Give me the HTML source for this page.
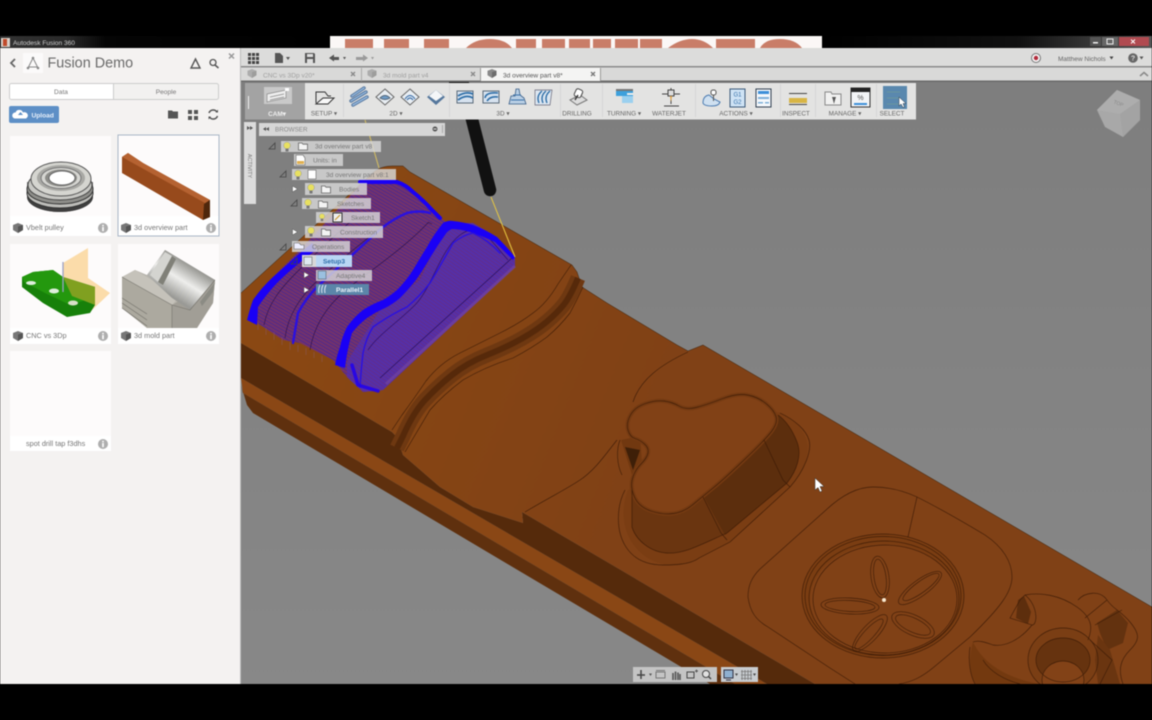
<!DOCTYPE html>
<html><head><meta charset="utf-8"><title>Fusion 360</title>
<style>
html,body{margin:0;padding:0;background:#000;width:1152px;height:720px;overflow:hidden}
svg{display:block;position:absolute;left:0;top:0;filter:blur(.4px)}
text{font-family:"Liberation Sans",sans-serif}
.l{font-size:6.4px;fill:#666;text-anchor:middle}
.t{font-size:6.6px;fill:#777}
.c{font-size:7.3px;fill:#777}
.m{fill:none;stroke:#3a1a06;stroke-width:.65;opacity:.9}
</style></head><body>
<svg width="1152" height="720" viewBox="0 0 1152 720" xmlns="http://www.w3.org/2000/svg">
<defs>
<linearGradient id="tb" x1="0" x2="1" y1="0" y2="0"><stop offset="0" stop-color="#333"/><stop offset=".2" stop-color="#2a2a2a"/><stop offset=".32" stop-color="#050505"/><stop offset="1" stop-color="#000"/></linearGradient>
<linearGradient id="tr" x1="0" x2="1" y1="0" y2="0"><stop offset="0" stop-color="#000"/><stop offset=".6" stop-color="#111"/><stop offset="1" stop-color="#555"/></linearGradient>
<linearGradient id="vp" x1="0" x2="0" y1="0" y2="1"><stop offset="0" stop-color="#7e7e7e"/><stop offset="1" stop-color="#888"/></linearGradient>
<linearGradient id="sf" gradientUnits="userSpaceOnUse" x1="280" y1="300" x2="660" y2="450"><stop offset="0" stop-color="#8a4813"/><stop offset="1" stop-color="#804116"/></linearGradient>
<linearGradient id="ch" gradientUnits="userSpaceOnUse" x1="178" y1="300" x2="198" y2="268"><stop offset="0" stop-color="#9a9a96"/><stop offset=".5" stop-color="#eeeeec"/><stop offset="1" stop-color="#8f8f8a"/></linearGradient>
<pattern id="h1" width="3" height="3" patternUnits="userSpaceOnUse" patternTransform="rotate(30)"><rect width="3" height="3" fill="#75326a"/><rect width="3" height="1" fill="#4f2a8c"/></pattern>
<pattern id="h2" width="3" height="3" patternUnits="userSpaceOnUse" patternTransform="rotate(-55)"><rect width="3" height="3" fill="#5f2e94"/><rect width="1.2" height="3" fill="#5030b0"/></pattern>
<symbol id="bulb" viewBox="0 0 10 12" overflow="visible"><circle cx="5" cy="4.500" r="3.400" fill="#e8e060" stroke="#999" stroke-width=".5"/><rect x="3.500" y="7.500" width="3" height="3" fill="#777"/></symbol>
<symbol id="fold" viewBox="0 0 10 10" overflow="visible"><path d="M.5 2H4L5 3.200H9.500V9H.5Z" fill="#f4f4f4" stroke="#666" stroke-width=".8"/></symbol>
<symbol id="cube" viewBox="0 0 10 10" overflow="visible"><path d="M0 2L5 0 10 2V7L5 10 0 7Z" fill="#777"/><path d="M5 3.500L10 2V7L5 10Z" fill="#555"/></symbol>
<symbol id="info" viewBox="0 0 10 10" overflow="visible"><circle cx="5" cy="5" r="5" fill="#aeaeae"/><rect x="4.200" y="4" width="1.600" height="4.200" fill="#fff"/><rect x="4.200" y="1.800" width="1.600" height="1.500" fill="#fff"/></symbol>
</defs>

<rect width="1152" height="720" fill="#000"/>
<rect x="0" y="36" width="330" height="12" fill="url(#tb)"/>
<rect x="822" y="36" width="330" height="12" fill="url(#tr)"/>
<rect x="330" y="36" width="492" height="12" fill="#fbf7f6"/>
<g fill="#c97d68">
<rect x="345" y="39" width="28" height="9"/><rect x="384" y="39" width="25" height="9"/><rect x="424" y="39" width="25" height="9"/>
<path d="M466 48Q475 39 490 39T512 48Z"/><rect x="516" y="39" width="20" height="9"/><rect x="542" y="39" width="23" height="9"/><rect x="569" y="39" width="21" height="9"/><rect x="593" y="39" width="18" height="9"/><rect x="615" y="39" width="23" height="9"/>
<rect x="640" y="39" width="22" height="9"/><path d="M668 48Q680 39 692 39T713 48Z"/><rect x="716" y="39" width="39" height="9"/><path d="M760 48Q765 39 780 39T802 48Z"/>
</g>
<rect x="1" y="38" width="9" height="9" fill="#d8d0c8"/><rect x="3" y="39" width="4" height="7" fill="#c04a2a"/>
<text x="13" y="45" font-size="6.600" fill="#cfcfcf">Autodesk Fusion 360</text>
<g><rect x="1090" y="37" width="11" height="9" fill="#555"/><rect x="1093" y="42" width="5" height="1.500" fill="#eee"/><rect x="1102" y="37" width="16" height="9" fill="#666"/><rect x="1107" y="39" width="6" height="5" fill="none" stroke="#eee"/><rect x="1119" y="37" width="30" height="9" fill="#b04a50"/><path d="M1131 39.500l4 4M1135 39.500l-4 4" stroke="#fff" stroke-width="1"/></g>

<!-- viewport -->
<rect x="241" y="81" width="911" height="603" fill="url(#vp)"/>
<!-- model base -->
<path d="M241 378L767 684H735L243 393Z" fill="#8a4715"/>
<path d="M241 385L243 393 735 684H710L253 413 247 405Z" fill="#5f300e"/>
<path d="M241 343L392 432 397 437 403 455 440 487 473 507 523 523 522 512 815 684H767L241 378Z" fill="#552a0b"/>
<path d="M241 293L375 171Q382 166 392 166H403L410 172 572 265 577 272 582 287 607 303 677 345 688 351 703 345 1152 607V684H815L522 512 523 523 473 507 440 487 403 455 397 437 392 432 241 343Z" fill="url(#sf)"/>
<path d="M241 293L375 171Q382 166 392 166H403L410 172 572 265 577 272 582 287 607 303 677 345 688 351 703 345 1152 607" fill="none" stroke="#3c2008" stroke-width=".5"/>

<!-- groove -->
<path d="M397 448L403 436Q413 413 425 400 437 387 452 375 467 363 487 355 507 347 522 338.500 537 330 547 321.500 557 313 563.500 305 570 297 578 278" fill="none" stroke="#6e3811" stroke-width="15"/>
<path d="M397 448L403 436Q413 413 425 400 437 387 452 375 467 363 487 355 507 347 522 338.500 537 330 547 321.500 557 313 563.500 305 570 297 578 278" fill="none" stroke="#56290a" stroke-width="6"/>
<path class="m" d="M392 430L402 415Q413 400 426 381 440 363 460 353 480 343 500 333 520 323 533 313 547 303 558 284L571 265"/>
<path class="m" d="M405 452Q418 430 430 410 443 395 463 380 485 367 513 358 532 348 547 337 560 326 570 313 577 300 583 287"/>
<path class="m" d="M525 512C550 497 565 490 580 480S605 455 617 440"/>
<path class="m" d="M633 402C640 380 660 365 688 352"/>

<!-- boss -->
<path d="M628 490C620 510 622 535 640 552S685 568 699 558L730 542 790 487C805 470 812 450 805 436S790 418 778 412Z" fill="#7a3d13"/>
<path d="M632 490V527C636 540 650 552 667 553S700 545 727 533L787 483C797 470 802 455 797 442S785 420 778 415L700 495Z" fill="#6a3510"/>
<path d="M704 497L725 535 787 483C797 470 802 455 797 442S785 420 778 415L765 440Z" fill="#5c2e0d"/>
<path d="M621 440L640 436 642 462 632 475Z" fill="#713810"/>
<path d="M625 447L640 450 633 470Z" fill="#3e1f08"/>
<path d="M630.500 415Q635 407 645.500 403.500 656 400 664 401 672 402 679 406 686 410 696 407.500 706 405 721.500 399 737 393 747.500 395 758 397 766 403.500 774 410 776 416.500 778 423 771.500 431.500 765 440 744 460 723 480 712.500 488.500 702 497 693 504.500 684 512 673.500 513.500 663 515 651 511 639 507 634.500 497 630 487 632.500 478.500 635 470 641 464 647 458 648 453 649 448 644.500 444 640 440 635 438.500 630 437 628 430 626 423 630.500 415Z" fill="#814116" stroke="#743a12" stroke-width="4"/>
<path class="m" d="M630.500 415Q635 407 645.500 403.500 656 400 664 401 672 402 679 406 686 410 696 407.500 706 405 721.500 399 737 393 747.500 395 758 397 766 403.500 774 410 776 416.500 778 423 771.500 431.500 765 440 744 460 723 480 712.500 488.500 702 497 693 504.500 684 512 673.500 513.500 663 515 651 511 639 507 634.500 497 630 487 632.500 478.500 635 470 641 464 647 458 648 453 649 448 644.500 444 640 440 635 438.500 630 437 628 430 626 423 630.500 415Z"/>
<path class="m" d="M620 440C616 450 617 465 622 475"/>
<path class="m" d="M632 490V527C636 540 650 552 667 553S700 545 727 533L787 483C797 470 802 455 797 442S785 420 778 415"/>
<path class="m" d="M625 490C617 505 615 530 626 547S655 565 663 565 690 565 699 558L730 542 790 487C805 470 812 450 809 440S795 420 780 413"/>
<path class="m" d="M703 497L721 533 727 540M764 440L783 480 790 487"/>

<!-- cursor -->
<path d="M815 478V490L818 487.500 820 492 822 491 820 486.500H824Z" fill="#fff" stroke="#333" stroke-width=".5"/>

<!-- round square + disc -->
<path class="m" d="M748 597C748 585 752 577 760 569L826 510C842 495 858 487 873 487 888 487 902 490 917 497 935 506 965 523 985 535 1003 547 1012 562 1012 577 1012 592 1000 608 970 637L934 667C922 677 912 682 899 684M748 597C750 612 756 620 768 627L830 668 855 684"/>
<path class="m" d="M917 497L908 537"/>
<ellipse cx="883" cy="596" rx="81" ry="62" fill="#773a11" opacity=".6"/>
<ellipse cx="884" cy="600" rx="74" ry="56" fill="#804116"/>
<ellipse cx="883" cy="596" rx="81" ry="62" class="m"/>
<ellipse cx="883" cy="596" rx="78" ry="59.500" class="m"/>
<ellipse cx="884" cy="598" rx="75" ry="57" class="m"/>
<ellipse cx="885" cy="599" rx="72" ry="54" class="m"/>
<g class="m">
<ellipse cx="880" cy="577" rx="9" ry="21" transform="rotate(-8 880 577)"/><ellipse cx="880" cy="577" rx="6" ry="18" transform="rotate(-8 880 577)"/>
<ellipse cx="920" cy="588" rx="26" ry="8" transform="rotate(-36 920 588)"/><ellipse cx="921" cy="587" rx="22" ry="5.500" transform="rotate(-36 921 587)"/>
<ellipse cx="850" cy="606" rx="29" ry="8" transform="rotate(3 850 606)"/><ellipse cx="850" cy="606" rx="25" ry="5.500" transform="rotate(3 850 606)"/>
<ellipse cx="870" cy="633" rx="24" ry="8" transform="rotate(-47 870 633)"/><ellipse cx="869" cy="634" rx="20" ry="5" transform="rotate(-47 869 634)"/>
<ellipse cx="913" cy="625" rx="23" ry="10" transform="rotate(25 913 625)"/><ellipse cx="913" cy="625" rx="19" ry="7" transform="rotate(25 913 625)"/>
</g>
<circle cx="884" cy="600" r="2" fill="#f8e8d0"/>

<!-- bottom-right shapes -->
<path d="M973 642C968 660 970 675 975 684H1040C1015 680 985 668 973 642Z" fill="#73390f"/>
<path d="M1018 600L1024 596 1031 612 1028 624 1016 618Z" fill="#5d2e0d"/>
<ellipse cx="1063" cy="660" rx="35" ry="32" fill="#7a3e14"/>
<ellipse cx="1063" cy="660" rx="27" ry="22" fill="#66330f"/>
<ellipse cx="1063" cy="680" rx="21" ry="19" fill="#824217"/>
<path d="M1097 623L1117 610 1128 623 1123 643 1107 650 1100 633Z" fill="#63320f"/>
<path d="M1098 635L1110 650 1120 684H1098L1095 660Z" fill="#6a3510"/>
<g class="m">
<path d="M973 642C978 640 985 642 993 645 1005 647 1020 640 1032 625L1010 618 1020 600 1025 595C1040 592 1060 595 1077 607S1092 630 1088 640"/>
<path d="M970 647C968 660 970 675 975 684M983 660C990 672 1005 680 1020 684"/>
<path d="M1025 595C1038 605 1038 625 1032 625"/>
<ellipse cx="1063" cy="660" rx="35" ry="32"/><ellipse cx="1063" cy="660" rx="27" ry="22"/><ellipse cx="1063" cy="680" rx="21" ry="19"/>
<path d="M1078 600C1085 592 1100 590 1107 600S1120 610 1130 622 1140 640 1130 650 1118 670 1123 684"/>
<path d="M1085 618L1107 600M1095 625L1122 610M1090 640L1112 660 1100 684"/>
</g>

<!-- toolpath -->
<path d="M250 320L273 277 300 250 363 182H393L413 190 432 210 447 223H473L497 237 515 257V267L383 390 363 392 347 377 333 360 300 343 283 340 257 323Z" fill="url(#h1)"/>
<path d="M347 362L380 310 420 280 447 223H473L497 237 515 257V267L383 390 363 392 347 377Z" fill="url(#h2)"/>
<path d="M380 378L512 258" fill="none" stroke="#2a1060" stroke-width=".7"/>
<path d="M386 384L515 266" fill="none" stroke="#7a4aa0" stroke-width="3" opacity=".55"/>
<path d="M368 350C378 335 398 322 415 305S440 250 460 235 490 240 508 260" fill="none" stroke="#300f6a" stroke-width=".7"/>
<g fill="none" stroke="#2a1048" stroke-width=".6"><path d="M264 325C268 303 282 287 297 272S330 240 350 222"/><path d="M285 338C288 315 300 297 318 280S360 245 380 228"/><path d="M310 350C314 325 328 305 346 290S385 262 410 240 425 222 432 224"/></g>
<path d="M247 320Q250 308 253 300 262 287 273 277L300 253 312 243 316 250 303 260Q288 272 277 283 265 296 258 307L257 325Z" fill="#1a00f5"/>
<path d="M335 365Q337 355 340 347 342 337 347 327 354 317 363 310 372 304 383 300 390 296 397 290 406 281 413 270 420 258 427 247 434 234 443 223 448 220 453 221 463 222 473 225 486 230 497 237 507 247 515 257L513 260Q504 251 495 242 482 236 470 232 460 229 452 229 447 231 445 235 437 246 430 258 423 270 416 280 408 290 400 298 393 304 385 308 376 312 367 318 358 325 352 333 347 350 345 368Z" fill="#1a00f5"/>
<g fill="none" stroke-linecap="round" stroke-linejoin="round">
<path d="M360 182H397Q406 185 413 192 423 200 432 210L440 218" stroke="#1a00f5" stroke-width="4"/>
<path d="M293 343Q296 325 298 313 306 298 317 287 333 272 350 257 366 242 383 227 395 218 407 213 420 210 430 213" stroke="#2a10e0" stroke-width="2.400"/>
<path d="M360 387Q361 370 363 353 366 338 373 327 390 315 407 307 420 296 430 283 442 263 453 243 463 235 473 233 488 240 500 253" stroke="#2a10e0" stroke-width="1.400"/>
<path d="M352 365L358 385 378 391" stroke="#2000f0" stroke-width="3.500" opacity=".85"/>
</g>
<g stroke="#8b5a6a" stroke-width=".6" opacity=".7"><path d="M258 322V330M266 328V335M274 332V340M282 337V345M290 342V350M298 345V352M306 348V355M314 352V358M322 356V362"/></g>

<!-- tool & wire -->
<path d="M365 120L379 168" stroke="#d8c060" stroke-width="1" fill="none"/>
<path d="M491 197L515 257" stroke="#e8c840" stroke-width="1" fill="none"/>
<path d="M463 84L490 190" stroke="#111" stroke-width="12.500" stroke-linecap="round" fill="none"/>
<rect x="449" y="81" width="15" height="2.500" fill="#111"/>

<!-- left panel -->
<rect x="0" y="48" width="240" height="636" fill="#f4f2f1"/>
<rect x="240" y="48" width="1" height="636" fill="#bbb"/>
<path d="M15 59L11 63 15 67" fill="none" stroke="#666" stroke-width="1.800"/>
<rect x="23" y="53" width="20" height="20" fill="#fbfafa"/>
<path d="M33 58L28 68M33 58L38 68M29 67H37" fill="none" stroke="#888" stroke-width="1"/><circle cx="33" cy="58" r="1.300" fill="#888"/><circle cx="28" cy="68" r="1.300" fill="#888"/><circle cx="38" cy="68" r="1.300" fill="#888"/>
<text x="47.500" y="67.500" font-size="14.400" fill="#6a6a6a">Fusion Demo</text>
<path d="M195.500 59L191 68H200Z" fill="none" stroke="#555" stroke-width="1.400"/>
<circle cx="213" cy="62.500" r="3" fill="none" stroke="#555" stroke-width="1.300"/><path d="M215 65L218.500 68" stroke="#555" stroke-width="1.500"/>
<path d="M229 53.500L234 58.500M234 53.500L229 58.500" stroke="#999" stroke-width="1.500"/>
<rect x="9.500" y="83.500" width="209" height="16" rx="2" fill="#f2f1f0" stroke="#ccc"/>
<path d="M113 84H11.500Q10 84 10 85.500V97.500Q10 99 11.500 99H113Z" fill="#fff"/>
<rect x="113" y="83" width="1" height="16" fill="#ccc"/>
<text x="61" y="94" class="t" style="text-anchor:middle">Data</text>
<text x="166" y="94" class="t" style="text-anchor:middle">People</text>
<rect x="9" y="106" width="50" height="17" rx="2" fill="#5d8fc6"/>
<path d="M15 118.500A3 3 0 0 1 15.500 112.500A4 4 0 0 1 23 112.500A3 3 0 0 1 26 118.500Z" fill="#fff"/><path d="M20.500 112L18 115H23Z" fill="#5d8fc6"/>
<text x="31.500" y="117.500" font-size="6.600" font-weight="bold" fill="#e8f0fa">Upload</text>
<path d="M168 110.500H172L173 111.500H178V118.500H168Z" fill="#555"/>
<g fill="#555"><rect x="188" y="110" width="4" height="4"/><rect x="194" y="110" width="4" height="4"/><rect x="188" y="116" width="4" height="4"/><rect x="194" y="116" width="4" height="4"/></g>
<path d="M209 113A4.500 4.500 0 0 1 217 112M217.500 116A4.500 4.500 0 0 1 209.500 117" fill="none" stroke="#555" stroke-width="1.500"/><path d="M215.500 112.500H218V109.500ZM211 116.500H208.500V119.500Z" fill="#555"/>

<!-- cards -->
<rect x="10" y="136" width="101" height="100" fill="#fdfbfb"/>
<rect x="118" y="135" width="101" height="101" fill="#fdfbfb" stroke="#a9b6c6"/>
<rect x="10" y="244" width="101" height="100" fill="#fdfbfb"/>
<rect x="118" y="244" width="101" height="100" fill="#fdfbfb"/>
<rect x="10" y="351" width="101" height="100" fill="#fdfbfb"/>
<rect x="10" y="216" width="101" height="20" fill="#fff"/><rect x="119" y="216" width="99.500" height="19.500" fill="#fff"/>
<rect x="10" y="328" width="101" height="16" fill="#fff"/><rect x="118" y="328" width="101" height="16" fill="#fff"/><rect x="10" y="436" width="101" height="15" fill="#fff"/>
<!-- pulley -->
<path d="M27 182V197C30 207 45 212 60 212S90 207 93 197V182Z" fill="#777"/>
<ellipse cx="60" cy="197" rx="33" ry="15" fill="#3e3e3e"/>
<ellipse cx="60" cy="193" rx="33" ry="15" fill="#bdbdb9" stroke="#333"/>
<ellipse cx="60" cy="189" rx="33" ry="15" fill="#8e8e8a" stroke="#333"/>
<ellipse cx="60" cy="185" rx="32" ry="15" fill="#c8c8c4" stroke="#444"/>
<ellipse cx="61" cy="179" rx="30" ry="17" fill="#d5d5d0" stroke="#555"/>
<ellipse cx="61" cy="178" rx="24" ry="13" fill="#a8a8a4"/>
<ellipse cx="61" cy="178" rx="20" ry="10.500" fill="#d6d6d2" stroke="#777"/>
<ellipse cx="61" cy="178" rx="16" ry="8.500" fill="#8c8c88"/>
<ellipse cx="62" cy="178" rx="13" ry="7" fill="#fff" stroke="#666"/>
<!-- block -->
<path d="M122 157L128 153 143 163 210 200V217L203 220 122 173Z" fill="#974a1c"/>
<path d="M122 157L128 153 143 163 210 200 205 203Z" fill="#b56231"/>
<path d="M204 204L210 200V217L203 220Z" fill="#4f270c"/>
<!-- green -->
<path d="M63 263L88 248V278L110 293 90 312 63 290Z" fill="#fbdcaa"/>
<path d="M22 277L33 272 53 270 63 277 95 287V305L90 313 67 317 43 303 22 287Z" fill="#17800a"/>
<path d="M22 277L33 272 53 270 63 277 95 287 92 298 70 305 45 293 24 282Z" fill="#24980e"/>
<path d="M63 277L95 287V305L72 296Z" fill="#80a020"/>
<path d="M63 262V292" stroke="#9aa0c8" stroke-width="1.300"/>
<ellipse cx="31" cy="283" rx="5" ry="2" fill="#dfeedd"/><ellipse cx="54" cy="291" rx="5" ry="2.500" fill="#dfeedd"/><ellipse cx="73" cy="303" rx="5" ry="2.500" fill="#d8e0c8"/>
<!-- mold -->
<path d="M122 277L135 270 147 275 165 250 215 280 213 303 197 328H147L122 308Z" fill="#b7b4ac"/>
<path d="M122 277L172 305V328H147L122 308Z" fill="#aca99f"/>
<path d="M172 305L215 280 213 303 197 328H172Z" fill="#a19e96"/>
<path d="M122 277L135 270 180 296 172 305Z" fill="#c5c2ba"/>
<path d="M147 275L165 250 215 280 190 310 172 298Z" fill="url(#ch)"/>
<path d="M150 275L165 252 172 256 158 282Z" fill="#d4d4d0"/>
<path d="M158 282L172 256 176 259 163 285Z" fill="#808078"/>
<path d="M200 302L215 282 213 292 202 306Z" fill="#8b8b84"/>
<path d="M122 298L147 314M122 303L147 320M122 308L147 326" stroke="#77756e" stroke-width=".7" fill="none"/>
<path d="M122 277L172 305V328M172 305L190 310 215 280" stroke="#77756e" stroke-width=".6" fill="none"/>
<!-- card labels -->
<use href="#cube" x="13" y="223" width="10" height="10"/><text x="26" y="230" class="c">Vbelt pulley</text><use href="#info" x="98" y="223" width="10" height="10"/>
<use href="#cube" x="121" y="223" width="10" height="10"/><text x="134" y="230" class="c">3d overview part</text><use href="#info" x="206" y="223" width="10" height="10"/>
<use href="#cube" x="13" y="331" width="10" height="10"/><text x="26" y="338" class="c">CNC vs 3Dp</text><use href="#info" x="98" y="331" width="10" height="10"/>
<use href="#cube" x="121" y="331" width="10" height="10"/><text x="134" y="338" class="c">3d mold part</text><use href="#info" x="206" y="331" width="10" height="10"/>
<text x="26" y="446" class="c">spot drill tap f3dhs</text><use href="#info" x="98" y="439" width="10" height="10"/>

<!-- top toolbar -->
<rect x="241" y="48" width="911" height="19" fill="#dcdcdb"/>
<rect x="241" y="66" width="911" height="1.500" fill="#8b8b8b"/>
<rect x="241" y="67.500" width="911" height="13" fill="#d9d9d8"/>
<rect x="241" y="80.500" width="911" height="1.500" fill="#6a6a6a"/>
<g fill="#444"><rect x="248" y="53" width="3" height="3"/><rect x="252" y="53" width="3" height="3"/><rect x="256" y="53" width="3" height="3"/><rect x="248" y="57" width="3" height="3"/><rect x="252" y="57" width="3" height="3"/><rect x="256" y="57" width="3" height="3"/><rect x="248" y="61" width="3" height="3"/><rect x="252" y="61" width="3" height="3"/><rect x="256" y="61" width="3" height="3"/></g>
<path d="M275 53H280L283 56V63H275Z" fill="#555"/><path d="M286 57H290L288 60Z" fill="#555"/>
<path d="M305 53H314L315 54V63H305Z" fill="#555"/><rect x="307" y="54" width="6" height="3" fill="#ddd"/><rect x="307" y="59" width="6" height="4" fill="#ddd"/>
<path d="M329 58L334 54.500V57H339V60H334V61.500Z" fill="#555"/><path d="M343 57H346L344.500 59.500Z" fill="#555"/>
<path d="M368 58L363 54.500V57H356V60H363V61.500Z" fill="#9a9a9a"/><path d="M371 57H374L372.500 59.500Z" fill="#9a9a9a"/>
<circle cx="1036" cy="58" r="4.500" fill="#f4f4f4" stroke="#777"/><circle cx="1036" cy="58" r="2.200" fill="#b22a3a"/>
<text x="1058" y="61" font-size="6.500" fill="#666">Matthew Nichols</text><path d="M1109.500 56.500H1113.500L1111.500 59.500Z" fill="#444"/>
<circle cx="1133" cy="58" r="4.800" fill="#666"/><text x="1133" y="60.500" font-size="7" font-weight="bold" fill="#ddd" text-anchor="middle">?</text><path d="M1139.500 56.500H1143.500L1141.500 59.500Z" fill="#555"/>
<!-- tabs -->
<rect x="361" y="68" width="1" height="13" fill="#aaa"/><rect x="480" y="68" width="1" height="13" fill="#999"/><rect x="600" y="68" width="1" height="13" fill="#999"/>
<rect x="481" y="68" width="119" height="13" fill="#f4f4f3"/>
<use href="#cube" x="247" y="69" width="10" height="9" opacity=".45"/><text x="263" y="77.500" class="t" style="fill:#a0a0a0">CNC vs 3Dp v20*</text><path d="M351 72L355 76M355 72L351 76" stroke="#888" stroke-width="1.300"/>
<use href="#cube" x="367" y="69" width="10" height="9" opacity=".45"/><text x="383" y="77.500" class="t" style="fill:#a0a0a0">3d mold part v4</text><path d="M471 72L475 76M475 72L471 76" stroke="#888" stroke-width="1.300"/>
<use href="#cube" x="487" y="69" width="10" height="9" opacity=".85"/><text x="503" y="77.500" class="t" style="fill:#555">3d overview part v8*</text><path d="M591 72L595 76M595 72L591 76" stroke="#777" stroke-width="1.300"/>
<path d="M1140 76L1144 72.500 1148 76" fill="none" stroke="#888" stroke-width="1.500"/>

<!-- ribbon -->
<rect x="245" y="83" width="671" height="36.500" fill="#e3e3e2"/>
<rect x="245" y="83" width="60" height="36.500" fill="#a3a3a3"/>
<rect x="248" y="96" width="1" height="13" fill="#eee"/>
<rect x="264" y="87" width="28" height="17" fill="#c9c9c9"/>
<path d="M267 94L286 90V98L267 102Z" fill="#eee" stroke="#888" stroke-width=".7"/><path d="M270 97L284 94M270 100L284 97" stroke="#888" stroke-width=".7"/><rect x="285" y="88" width="4" height="3" fill="#fff"/>
<text x="277" y="116" font-size="6.400" font-weight="bold" fill="#f0f0f0" text-anchor="middle">CAM▾</text>
<rect x="343" y="84" width="1" height="33" fill="#d6d6d6"/><rect x="449" y="84" width="1" height="33" fill="#d6d6d6"/><rect x="560" y="84" width="1" height="33" fill="#d6d6d6"/><rect x="602" y="84" width="1" height="33" fill="#d6d6d6"/><rect x="695" y="84" width="1" height="33" fill="#d6d6d6"/><rect x="780" y="84" width="1" height="33" fill="#d6d6d6"/><rect x="815" y="84" width="1" height="33" fill="#d6d6d6"/><rect x="876" y="84" width="1" height="33" fill="#d6d6d6"/>
<!-- setup -->
<path d="M316 103V92H325L328 96H331" fill="none" stroke="#333" stroke-width="1"/><path d="M316 104H328L334 98H323Z" fill="#f8f8f8" stroke="#333" stroke-width="1"/>
<!-- 2D -->
<g fill="none" stroke-linecap="round"><path d="M352 96L364 88M351 101L366 92M353 105L367 97" stroke="#54759c" stroke-width="3.400"/><path d="M352 96L364 88M351 101L366 92M353 105L367 97" stroke="#8fb2d8" stroke-width="1.600"/></g>
<path d="M385 89L394 97 385 105 376 97Z" fill="#e9eef3" stroke="#666"/><path d="M380 98Q385 93 390 98Q385 101 380 98Z" fill="#6e9cc8" stroke="#567"/>
<path d="M410 89L419 97 410 105 401 97Z" fill="#e9eef3" stroke="#666"/><path d="M405 99Q410 92 415 99M407 100Q410 96 413 100" fill="none" stroke="#4a7ab0" stroke-width="1.200"/>
<path d="M436 90L445 97 436 105 427 97Z" fill="#55779c"/><path d="M436 90L443 96 436 101 429 96Z" fill="#f4f6f8"/>
<!-- 3D -->
<g><path d="M457 91H473V103H457Z" fill="#d6e2ef" stroke="#5a6a7a"/><path d="M458 96Q466 91 473 94M458 100Q466 94 473 98" fill="none" stroke="#2f6fa8" stroke-width="1.800"/></g>
<g><path d="M483 91H499V103H483Z" fill="#d6e2ef" stroke="#5a6a7a"/><path d="M485 98Q486 92 498 93M487 101Q490 96 498 97" fill="none" stroke="#2f6fa8" stroke-width="1.600"/></g>
<path d="M509 104L511 96 515 96 516 89H519L520 95 524 98 526 104Z" fill="#b9cfe5" stroke="#3a5f88" stroke-width=".8"/><path d="M511 100H524M513 95H521" stroke="#3a70a8"/>
<path d="M535 90H552L550 105H535Z" fill="#dde7f1" stroke="#667" stroke-width=".7"/><path d="M539 103Q536 96 542 91M543 103Q540 96 546 91M547 103Q544 96 550 91" fill="none" stroke="#2f6fa8" stroke-width="1.400"/>
<!-- drilling -->
<path d="M570 100L580 95 587 100 577 105Z" fill="#ddd" stroke="#777"/><rect x="575" y="89" width="7" height="8" rx="2" fill="#fff" stroke="#444" transform="rotate(25 578 93)"/><path d="M578 95L575 100" stroke="#333" stroke-width="1.300"/>
<!-- turning -->
<rect x="616" y="91" width="17" height="5" fill="#3da0dc"/><rect x="622" y="96" width="11" height="7" fill="#9bd0ef"/><rect x="616" y="89" width="17" height="2" fill="#777"/><rect x="627" y="93" width="6" height="2" fill="#eee"/>
<!-- waterjet -->
<path d="M662 94H680M671 104V88" stroke="#444" stroke-width="1" fill="none"/><rect x="668" y="90" width="6" height="6" fill="#ddd" stroke="#444"/><path d="M670 96L671 102 672 96" fill="#e0a040"/><path d="M664 106H679" stroke="#444"/>
<!-- actions -->
<path d="M703 103Q703 96 709 95L714 99 720 102Q719 106 712 106 704 106 703 103Z" fill="#cfe0f0" stroke="#4a7ab0"/><rect x="711" y="90" width="5" height="5" rx="2" fill="#fff" stroke="#555"/><path d="M713.500 95V101" stroke="#555"/>
<rect x="730" y="89" width="15" height="18" fill="#cfe3f5" stroke="#3a5a7a"/><text x="737.500" y="96.500" font-size="6" fill="#3670a8" text-anchor="middle">G1</text><text x="737.500" y="104" font-size="6" fill="#3670a8" text-anchor="middle">G2</text>
<rect x="756" y="89" width="15" height="18" fill="#f5f8fb" stroke="#2f3f4f"/><rect x="758" y="91" width="11" height="3" fill="#3d8fd8"/><rect x="758" y="97" width="11" height="2" fill="#7fb0d8"/><rect x="758" y="102" width="5" height="1.500" fill="#7fb0d8"/><rect x="765" y="102" width="4" height="1.500" fill="#7fb0d8"/>
<!-- inspect -->
<rect x="789" y="93" width="18" height="1" fill="#444"/><rect x="789" y="98" width="18" height="5" fill="#d8b545"/><rect x="789" y="104" width="18" height="1" fill="#444"/>
<!-- manage -->
<path d="M825 92H831L832 94H841V105H825Z" fill="#f1f1f0" stroke="#888"/><path d="M832 97H836L835 100 834 104 833 100Z" fill="#555"/>
<rect x="851" y="88" width="19" height="19" fill="#f2f4f6" stroke="#333"/><rect x="851" y="88" width="19" height="4" fill="#222"/><text x="860.500" y="100" font-size="7" fill="#555" text-anchor="middle">%</text><rect x="854" y="103" width="13" height="2" fill="#3d8fd8"/>
<!-- select -->
<rect x="883" y="86" width="24" height="23" fill="#5a88ae"/><path d="M887 92H900M887 98H900M887 104H900" stroke="#6f9a9a" stroke-width=".8"/><path d="M899 97V106L901 104 903 107.500 904.500 107 903 103.500H906Z" fill="#fff" stroke="#234" stroke-width=".5"/>
<g>
<text x="324" y="115.500" class="l">SETUP ▾</text><text x="396" y="115.500" class="l">2D ▾</text><text x="503" y="115.500" class="l">3D ▾</text><text x="577" y="115.500" class="l">DRILLING</text><text x="624" y="115.500" class="l">TURNING ▾</text><text x="669" y="115.500" class="l">WATERJET</text><text x="736" y="115.500" class="l">ACTIONS ▾</text><text x="796" y="115.500" class="l">INSPECT</text><text x="845" y="115.500" class="l">MANAGE ▾</text><text x="892" y="115.500" class="l">SELECT</text>
</g>
<!-- view cube -->
<path d="M1097 110L1117 90 1140 100V120L1123 137 1105 127Z" fill="#a8a8a8"/>
<path d="M1097 110L1117 90 1140 100 1120 114Z" fill="#adadad"/><path d="M1120 114L1140 100V120L1123 137Z" fill="#a3a3a3"/>
<text x="1118" y="105" font-size="5" fill="#8a8a8a" text-anchor="middle" transform="rotate(20 1118 105)">TOP</text>

<!-- browser -->
<rect x="244" y="122" width="12" height="82" fill="#dcdcdc"/>
<text x="250" y="164" font-size="5.400" fill="#777" text-anchor="middle" transform="rotate(90 248 164)">ACTIVITY</text>
<path d="M247 126L250 128 247 130ZM250 126L253 128 250 130Z" fill="#555"/>
<rect x="259" y="123" width="186" height="13" fill="#d6d6d6"/>
<path d="M266 127L263 129 266 131ZM269 127L266 129 269 131Z" fill="#555"/>
<text x="275" y="131.500" font-size="6.300" fill="#888">BROWSER</text>
<circle cx="435" cy="129" r="2.500" fill="#555"/><rect x="433.500" y="128.500" width="3" height="1" fill="#ddd"/><rect x="442" y="125" width="1" height="8" fill="#aaa"/>
<g fill="#d8d8d8" fill-opacity=".82">
<rect x="281" y="141" width="100" height="11"/><rect x="294" y="154" width="49" height="12"/><rect x="292" y="169" width="104" height="11"/><rect x="305" y="183" width="62" height="12"/><rect x="302" y="198" width="69" height="11"/><rect x="316" y="212" width="64" height="11"/><rect x="305" y="226" width="78" height="12"/><rect x="292" y="241" width="58" height="11"/><rect x="316" y="270" width="56" height="11"/>
</g>
<rect x="302" y="255" width="50" height="12" fill="#b9d6f4"/><rect x="302" y="255" width="14" height="12" fill="#d8d8d8"/>
<rect x="316" y="284" width="53" height="11" fill="#5b86a9"/>
<g fill="none" stroke="#444" stroke-width=".8"><path d="M269 149L275 143V149Z"/><path d="M280 177L286 171V177Z"/><path d="M291 206L297 200V206Z"/><path d="M280 250L286 244V250Z"/><path d="M291 264L297 258V264Z"/></g>
<g fill="#fff" stroke="#555" stroke-width=".5"><path d="M292.500 186L297.500 189 292.500 192Z"/><path d="M292.500 229L297.500 232 292.500 235Z"/><path d="M304 272L309 275 304 278Z"/><path d="M304 287L309 290 304 293Z"/></g>
<use href="#bulb" x="282" y="141" width="10" height="12"/><use href="#bulb" x="293" y="169" width="10" height="12"/><use href="#bulb" x="306" y="183" width="10" height="12"/><use href="#bulb" x="303" y="198" width="10" height="12"/><use href="#bulb" x="318" y="212" width="8" height="11"/><use href="#bulb" x="306" y="226" width="10" height="12"/>
<use href="#fold" x="298" y="141" width="10" height="10"/><path d="M296 155H303L305 158V165H296Z" fill="#fff" stroke="#777" stroke-width=".7"/><rect x="297" y="161" width="7" height="3" fill="#e0b050"/>
<path d="M308 170H316V179H308Z" fill="#fff" stroke="#777" stroke-width=".7"/>
<use href="#fold" x="321" y="184" width="10" height="10"/><use href="#fold" x="318" y="199" width="10" height="10"/><use href="#fold" x="321" y="227" width="10" height="10"/>
<rect x="333" y="213" width="9" height="9" fill="#eee" stroke="#333"/><path d="M335 220L340 215" stroke="#c89020"/>
<path d="M294 249V243H299L301 245H304V249Z" fill="#eef" stroke="#666" stroke-width=".6"/>
<rect x="304" y="257" width="8" height="8" fill="#dfe8f0" stroke="#666" stroke-width=".6"/>
<rect x="318" y="271" width="8" height="8" fill="#9bc0e0" stroke="#567" stroke-width=".6"/>
<path d="M319 293Q318 289 320 285M322 293Q321 289 323 285M325 293Q324 289 326 285" fill="none" stroke="#dfe8f4" stroke-width="1"/>
<text x="315" y="148.300" class="t">3d overview part v8</text>
<text x="313" y="162.300" class="t">Units: in</text>
<text x="326" y="177" class="t">3d overview part v8:1</text>
<text x="339" y="191.500" class="t">Bodies</text>
<text x="337" y="206" class="t">Sketches</text>
<text x="351" y="219.800" class="t">Sketch1</text>
<text x="340" y="234.500" class="t">Construction</text>
<text x="312" y="249" class="t">Operations</text>
<text x="323" y="263.500" style="font-size:6.600px;fill:#2f6eaa;font-weight:bold">Setup3</text>
<text x="336" y="278" class="t">Adaptive4</text>
<text x="336" y="292" style="font-size:6.600px;fill:#eef4fa;font-weight:bold">Parallel1</text>

<!-- bottom nav -->
<rect x="633" y="667" width="84" height="15" fill="#c4c4c4"/>
<rect x="721" y="667" width="37" height="15" fill="#c8ccd0"/>
<path d="M641 670V679M637 675H645" stroke="#444" stroke-width="1.500"/><path d="M649 673.500H652L650.500 676Z" fill="#555"/>
<rect x="656" y="672" width="9" height="6" fill="none" stroke="#777"/><path d="M656 670.500H665" stroke="#777"/>
<path d="M673 680V673M675.500 680V671.500M678 680V672.500M680 680V674" stroke="#555" stroke-width="1.600"/>
<rect x="687" y="672" width="7" height="6" fill="none" stroke="#444"/><path d="M695 671H698M696.500 669.500V672.500" stroke="#555"/>
<circle cx="706" cy="674" r="3.500" fill="#e0e0e0" stroke="#444"/><path d="M708.500 676.500L711 679" stroke="#444" stroke-width="1.400"/>
<rect x="724" y="670" width="9" height="8" fill="#8fb0d0" stroke="#334"/><path d="M726 680H731" stroke="#334"/><path d="M735 673.500H738L736.500 676Z" fill="#444"/>
<path d="M742 670V680M745 670V680M748 670V680M751 670V680M741 671.500H752M741 675H752M741 678.500H752" stroke="#777" stroke-width=".8"/><path d="M753 673.500H756L754.500 676Z" fill="#444"/>

<rect x="0" y="684" width="1152" height="36" fill="#000"/>
</svg>
</body></html>
